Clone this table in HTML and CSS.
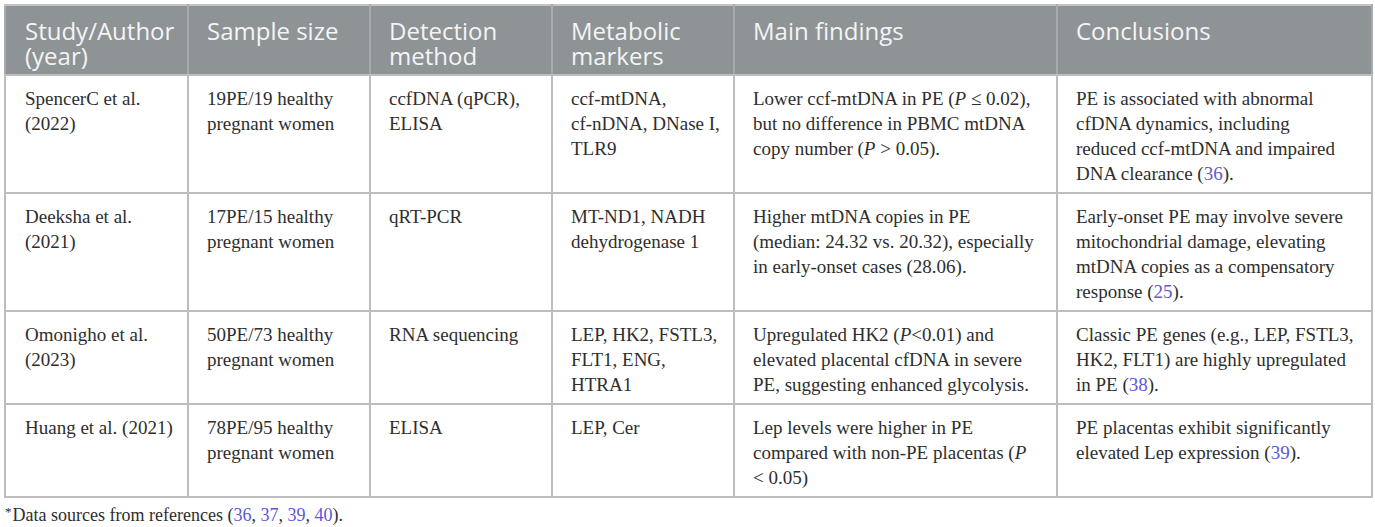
FILE: index.html
```html
<!DOCTYPE html>
<html>
<head>
<meta charset="utf-8">
<link rel="stylesheet" href="styles.css">
</head>
<body>
<table class="data">
  <colgroup>
    <col class="c1"><col class="c2"><col class="c3"><col class="c4"><col class="c5"><col class="c6">
  </colgroup>
  <thead>
    <tr>
      <th>Study/Author<br>(year)</th>
      <th>Sample size</th>
      <th>Detection<br>method</th>
      <th>Metabolic<br>markers</th>
      <th>Main findings</th>
      <th>Conclusions</th>
    </tr>
  </thead>
  <tbody>
    <tr>
      <td>SpencerC et al.<br>(2022)</td>
      <td>19PE/19 healthy<br>pregnant women</td>
      <td>ccfDNA (qPCR),<br>ELISA</td>
      <td>ccf-mtDNA,<br>cf-nDNA, DNase I,<br>TLR9</td>
      <td>Lower ccf-mtDNA in PE (<i>P</i> ≤ 0.02),<br>but no difference in PBMC mtDNA<br>copy number (<i>P</i> &gt; 0.05).</td>
      <td>PE is associated with abnormal<br>cfDNA dynamics, including<br>reduced ccf-mtDNA and impaired<br>DNA clearance (<a class="ref">36</a>).</td>
    </tr>
    <tr>
      <td>Deeksha et al.<br>(2021)</td>
      <td>17PE/15 healthy<br>pregnant women</td>
      <td>qRT-PCR</td>
      <td>MT-ND1, NADH<br>dehydrogenase 1</td>
      <td>Higher mtDNA copies in PE<br>(median: 24.32 vs. 20.32), especially<br>in early-onset cases (28.06).</td>
      <td>Early-onset PE may involve severe<br>mitochondrial damage, elevating<br>mtDNA copies as a compensatory<br>response (<a class="ref">25</a>).</td>
    </tr>
    <tr>
      <td>Omonigho et al.<br>(2023)</td>
      <td>50PE/73 healthy<br>pregnant women</td>
      <td>RNA sequencing</td>
      <td>LEP, HK2, FSTL3,<br>FLT1, ENG,<br>HTRA1</td>
      <td>Upregulated HK2 (<i>P</i>&lt;0.01) and<br>elevated placental cfDNA in severe<br>PE, suggesting enhanced glycolysis.</td>
      <td>Classic PE genes (e.g., LEP, FSTL3,<br>HK2, FLT1) are highly upregulated<br>in PE (<a class="ref">38</a>).</td>
    </tr>
    <tr>
      <td>Huang et al. (2021)</td>
      <td>78PE/95 healthy<br>pregnant women</td>
      <td>ELISA</td>
      <td>LEP, Cer</td>
      <td>Lep levels were higher in PE<br>compared with non-PE placentas (<i>P</i><br>&lt; 0.05)</td>
      <td>PE placentas exhibit significantly<br>elevated Lep expression (<a class="ref">39</a>).</td>
    </tr>
  </tbody>
</table>
<p class="note"><sup>*</sup>Data sources from references (<a class="ref">36</a>, <a class="ref">37</a>, <a class="ref">39</a>, <a class="ref">40</a>).</p>
</body>
</html>
```

FILE: styles.css
```css
html, body {
  margin: 0;
  padding: 0;
  background: #ffffff;
}
body {
  padding: 4px 0 0 4px;
}
.data {
  border-collapse: collapse;
  table-layout: fixed;
  width: 1367px;
  border: 2px solid #bdbdbd;
}
.c1 { width: 183px; }
.c2 { width: 182px; }
.c3 { width: 182px; }
.c4 { width: 182px; }
.c5 { width: 323px; }
.c6 { width: 315px; }
.data th {
  background: #8e9396;
  color: #f4f4f4;
  font-family: "Open Sans", "Noto Sans", sans-serif;
  font-weight: 400;
  font-size: 24px;
  line-height: 25px;
  text-align: left;
  vertical-align: top;
  white-space: nowrap;
  padding: 12px 18px 6px 18px;
  border: 2px solid #a7abad;
  border-top-color: #c4c4c4;
  border-bottom-color: #bdbdbd;
}
.data td {
  font-family: "Liberation Serif", "Times New Roman", serif;
  font-size: 19px;
  line-height: 25px;
  color: #2e2e2e;
  vertical-align: top;
  white-space: nowrap;
  padding: 10px 18px 6px 18px;
  border: 2px solid #bdbdbd;
}
.data th:first-child, .data td:first-child {
  padding-left: 19px;
}
.ref {
  color: #5d58d8;
  text-decoration: none;
}
.note {
  margin: 6px 0 0 1px;
  font-family: "Liberation Serif", "Times New Roman", serif;
  font-size: 18px;
  line-height: 22px;
  color: #2e2e2e;
}
.note sup {
  font-size: 13px;
  vertical-align: 5px;
  line-height: 0;
  margin-right: 1px;
}
```
